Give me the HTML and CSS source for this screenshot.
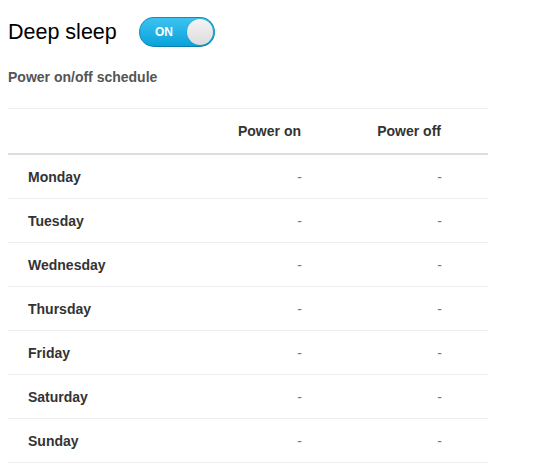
FILE: index.html
```html
<!DOCTYPE html>
<html>
<head>
<meta charset="utf-8">
<link rel="stylesheet" href="styles.css">
</head>
<body>
<div class="page">
  <div class="title-row">
    <span class="title">Deep sleep</span>
    <div class="toggle">
      <span class="toggle-label">ON</span>
      <span class="knob"></span>
    </div>
  </div>
  <div class="subtitle">Power on/off schedule</div>
  <table class="schedule">
    <thead>
      <tr><th class="day"></th><th class="on">Power on</th><th class="off">Power off</th><th class="rest"></th></tr>
    </thead>
    <tbody>
      <tr><td class="day">Monday</td><td class="on">-</td><td class="off">-</td><td class="rest"></td></tr>
      <tr><td class="day">Tuesday</td><td class="on">-</td><td class="off">-</td><td class="rest"></td></tr>
      <tr><td class="day">Wednesday</td><td class="on">-</td><td class="off">-</td><td class="rest"></td></tr>
      <tr><td class="day">Thursday</td><td class="on">-</td><td class="off">-</td><td class="rest"></td></tr>
      <tr><td class="day">Friday</td><td class="on">-</td><td class="off">-</td><td class="rest"></td></tr>
      <tr><td class="day">Saturday</td><td class="on">-</td><td class="off">-</td><td class="rest"></td></tr>
      <tr><td class="day">Sunday</td><td class="on">-</td><td class="off">-</td><td class="rest"></td></tr>
    </tbody>
  </table>
</div>
</body>
</html>
```

FILE: styles.css
```css
html, body { margin: 0; padding: 0; background: #fff; }
body { font-family: "Liberation Sans", Arial, sans-serif; }
.page { padding: 17px 8px 0 8px; }
.title-row { display: flex; align-items: center; height: 30px; }
.title { font-size: 21.5px; color: #000; width: 131px; }
.toggle {
  position: relative;
  width: 76px; height: 30px; box-sizing: border-box;
  border-radius: 15px;
  background: linear-gradient(#3cc3f0, #0aa2dc);
  border: 1px solid #0a8fc4;
  border-bottom-color: #077fae;
}
.toggle-label {
  position: absolute; left: 15px; top: 7px;
  font-size: 12px; font-weight: bold; color: #fff; line-height: 14px;
}
.knob {
  position: absolute; right: 1px; top: 1px;
  width: 26px; height: 26px; border-radius: 50%;
  background: linear-gradient(#f4f4f4, #dcdcdc);
  box-shadow: 0 0 1px rgba(0,0,0,0.4);
}
.subtitle {
  margin-top: 22px;
  font-size: 14px; font-weight: bold; color: #555; line-height: 17px;
}
.schedule {
  margin-top: 22px;
  width: 480px; border-collapse: collapse;
  border-top: 1px solid #eee;
  font-size: 14px; color: #333;
}
.schedule th { height: 44px; padding: 0; font-weight: bold; border-bottom: 2px solid #ddd; }
.schedule td { height: 43px; padding: 0; border-bottom: 1px solid #eee; }
.schedule .day { width: 200px; text-align: left; padding-left: 20px; box-sizing: border-box; font-weight: bold; }
.schedule .on { width: 100px; text-align: right; padding-right: 6px; box-sizing: border-box; }
.schedule .off { width: 140px; text-align: right; padding-right: 6px; box-sizing: border-box; }
.schedule th.on, .schedule th.off { padding-right: 7px; }
.schedule td.on, .schedule td.off { color: #777; }
.schedule .rest { width: 40px; }
```
